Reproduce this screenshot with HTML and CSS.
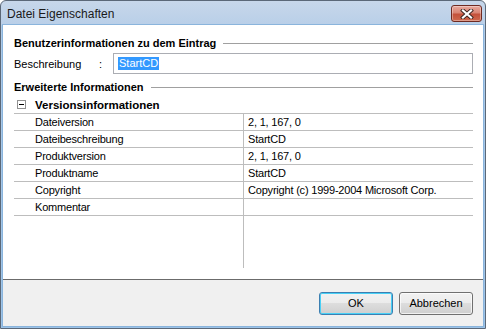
FILE: index.html
```html
<!DOCTYPE html>
<html lang="de">
<head>
    <meta charset="UTF-8">
    <title>Datei Eigenschaften</title>
    <link rel="stylesheet" href="styles.css">
</head>
<body>
    <div class="window">
        <div class="titlebar">
            <span class="title">Datei Eigenschaften</span>
            <button class="close" type="button" aria-label="Schließen">
                <svg width="14" height="10" viewBox="0 0 14 10">
                    <path d="M3 1.5 L11 8.5 M11 1.5 L3 8.5" stroke="#3a2420" stroke-width="4" stroke-linecap="square"/>
                    <path d="M3 1.5 L11 8.5 M11 1.5 L3 8.5" stroke="#ffffff" stroke-width="2.2" stroke-linecap="square"/>
                </svg>
            </button>
        </div>

        <div class="client">
            <div class="content">
                <div class="group-head"><span>Benutzerinformationen zu dem Eintrag</span></div>

                <div class="field">
                    <span class="field-label">Beschreibung</span>
                    <span class="colon">:</span>
                    <div class="textbox"><span class="selected">StartCD</span></div>
                </div>

                <div class="group-head second"><span>Erweiterte Informationen</span></div>

                <div class="category">
                    <span class="toggle"></span>
                    <span class="category-name">Versionsinformationen</span>
                </div>

                <div class="grid">
                    <div class="row"><div class="key">Dateiversion</div><div class="val">2, 1, 167, 0</div></div>
                    <div class="row"><div class="key">Dateibeschreibung</div><div class="val">StartCD</div></div>
                    <div class="row"><div class="key">Produktversion</div><div class="val">2, 1, 167, 0</div></div>
                    <div class="row"><div class="key">Produktname</div><div class="val">StartCD</div></div>
                    <div class="row"><div class="key">Copyright</div><div class="val">Copyright (c) 1999-2004 Microsoft Corp.</div></div>
                    <div class="row"><div class="key">Kommentar</div><div class="val"></div></div>
                    <div class="filler"><div class="key"></div><div class="val"></div></div>
                </div>
            </div>

            <div class="footer">
                <button class="btn default" type="button">OK</button>
                <button class="btn" type="button">Abbrechen</button>
            </div>
        </div>
    </div>
</body>
</html>
```

FILE: styles.css
```css
* {
    margin: 0;
    padding: 0;
    box-sizing: border-box;
}

body {
    background: #ffffff;
    font-family: 'Liberation Sans', Arial, sans-serif;
    font-size: 11px;
    color: #000000;
}

.window {
    width: 486px;
    height: 329px;
    border: 1px solid #5b6878;
    border-radius: 6px 6px 0 0;
    background: linear-gradient(180deg, #c7d7ea 0px, #b9cfe8 24px, #aecbe9 25px, #9cc3e8 100%);
    padding: 0 2px 2px;
    display: flex;
    flex-direction: column;
}

/* Titelleiste */
.titlebar {
    height: 24px;
    display: flex;
    align-items: flex-start;
    justify-content: space-between;
    padding-left: 4px;
}

.title {
    font-size: 12px;
    line-height: 14px;
    margin-top: 6px;
    color: #1a1a1a;
}

.close {
    width: 31px;
    height: 17px;
    margin-top: 4px;
    margin-right: 1px;
    border: 1px solid #6e2a22;
    border-radius: 3px;
    background: linear-gradient(180deg, #e8a99e 0%, #d98574 45%, #c4513b 55%, #cf6a4f 100%);
    box-shadow: inset 0 0 0 1px rgba(255, 255, 255, 0.35);
    display: flex;
    align-items: center;
    justify-content: center;
}

/* Client-Bereich */
.client {
    flex: 1;
    display: flex;
    flex-direction: column;
    background: #ffffff;
    box-shadow: 0 0 0 1px #8ab4dc;
}

.content {
    flex: 1;
    display: flex;
    flex-direction: column;
    padding: 11px 10px 11px 11px;
}

.group-head {
    display: flex;
    align-items: center;
    gap: 7px;
    font-weight: 700;
    line-height: 14px;
}

.group-head::after {
    content: "";
    flex: 1;
    height: 1px;
    background: #a0a0a0;
}

.group-head.second {
    margin-top: 6px;
}

.field {
    display: flex;
    align-items: center;
    margin-top: 3px;
    height: 21px;
}

.field-label {
    width: 85px;
}

.colon {
    width: 14px;
}

.textbox {
    flex: 1;
    height: 21px;
    border: 1px solid #abadb3;
    padding: 3px 0 0 4px;
}

.selected {
    display: inline-block;
    background: #3399ff;
    color: #ffffff;
    line-height: 13px;
    padding: 0 1px;
}

/* Eigenschaftsraster */
.category {
    display: flex;
    align-items: center;
    height: 17px;
    margin-top: 2px;
    font-weight: 700;
    font-size: 11.5px;
}

.toggle {
    width: 9px;
    height: 9px;
    margin: 0 9px 0 3px;
    border: 1px solid #919191;
    background: #ffffff;
    display: flex;
    align-items: center;
    justify-content: center;
}

.toggle::before {
    content: "";
    width: 5px;
    height: 1px;
    background: #000000;
}

.grid {
    flex: 1;
    display: flex;
    flex-direction: column;
    border-top: 1px solid #bdbdbd;
    letter-spacing: -0.2px;
}

.row {
    display: flex;
    height: 17px;
    border-bottom: 1px solid #bdbdbd;
    line-height: 16px;
}

.key {
    width: 230px;
    padding-left: 21px;
    border-right: 1px solid #bdbdbd;
}

.val {
    flex: 1;
    padding-left: 4px;
}

.filler {
    flex: 1;
    display: flex;
}

/* Fußzeile */
.footer {
    height: 47px;
    border-top: 1px solid #6b6b6b;
    background: #f0f0f0;
    display: flex;
    align-items: center;
    justify-content: flex-end;
    gap: 6px;
    padding-right: 10px;
}

.btn {
    width: 74px;
    height: 23px;
    font-family: 'Liberation Sans', Arial, sans-serif;
    font-size: 11px;
    color: #000000;
    border: 1px solid #707070;
    border-radius: 3px;
    background: linear-gradient(180deg, #f2f2f2 0%, #ebebeb 50%, #dddddd 50%, #cfcfcf 100%);
    box-shadow: inset 0 0 0 1px rgba(255, 255, 255, 0.7);
}

.btn.default {
    border-color: #3c7fb1;
    box-shadow: inset 0 0 0 1px #48d0f6;
}
```
